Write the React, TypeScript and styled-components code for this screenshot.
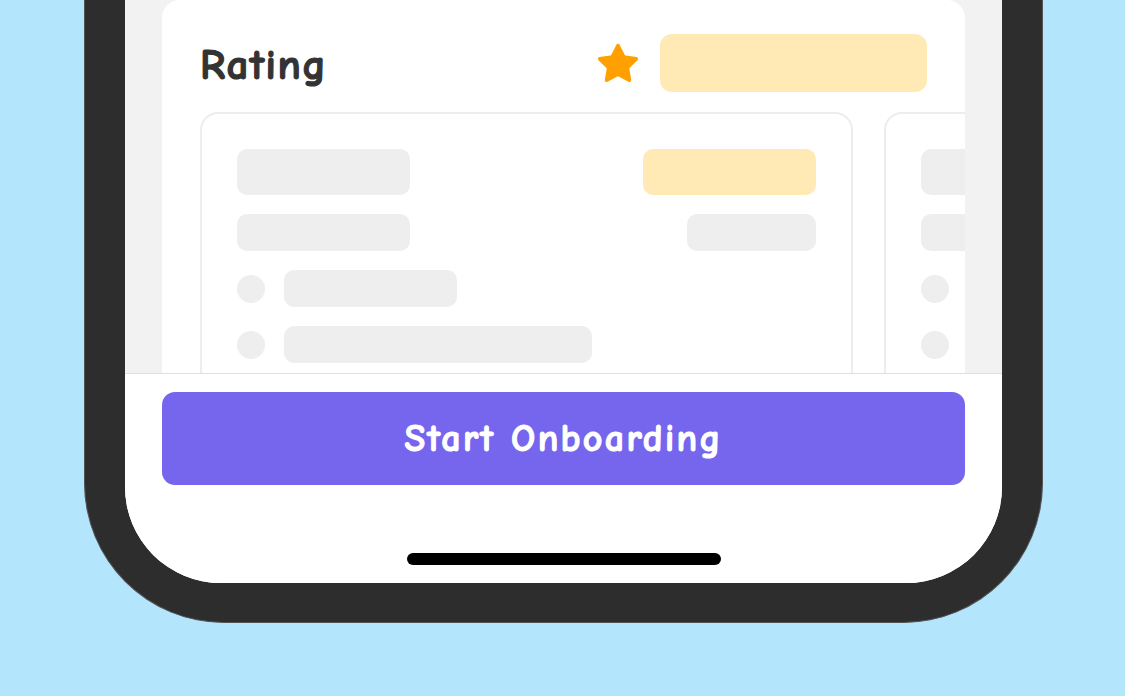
import styled, { createGlobalStyle } from "styled-components";

const GlobalStyle = createGlobalStyle`
    * {
        box-sizing: border-box;
    }
    html, body {
        margin: 0;
        padding: 0;
        background: #b3e5fc;
        font-family: "Comic Sans MS", "Comic Neue", "Noto Sans", sans-serif;
        overflow: hidden;
    }
`;

const StarIcon = () => (
    <svg width="46" height="46" viewBox="0 0 24 24">
        <polygon
            points="12,2.5 15,8.4 21.5,9.3 16.8,13.9 17.9,20.4 12,17.3 6.1,20.4 7.2,13.9 2.5,9.3 9,8.4"
            fill="#ffa000"
            stroke="#ffa000"
            strokeWidth="2"
            strokeLinejoin="round"
        />
    </svg>
);

const SkeletonCard = () => (
    <InfoCard>
        <Row>
            <Bar $w={173} $h={46} />
            <Bar $w={173} $h={46} $tone="yellow" />
        </Row>
        <Row>
            <Bar $w={173} $h={37} />
            <Bar $w={129} $h={37} />
        </Row>
        <ListRow>
            <Dot />
            <Bar $w={173} $h={37} />
        </ListRow>
        <ListRow>
            <Dot />
            <Bar $w={308} $h={37} />
        </ListRow>
        <ListRow>
            <Dot />
            <Bar $w={240} $h={37} />
        </ListRow>
    </InfoCard>
);

const App = () => {
    return (
        <>
            <GlobalStyle />
            <Stage>
                <Phone>
                    <Screen>
                        <ScrollArea>
                            <RatingPanel>
                                <PanelHeader>
                                    <Title>Rating</Title>
                                    <ScoreGroup>
                                        <StarIcon />
                                        <Bar $w={267} $h={58} $tone="yellow" $radius={12} />
                                    </ScoreGroup>
                                </PanelHeader>
                                <CardStrip>
                                    <SkeletonCard />
                                    <SkeletonCard />
                                </CardStrip>
                            </RatingPanel>
                        </ScrollArea>
                        <BottomBar>
                            <PrimaryButton type="button">Start Onboarding</PrimaryButton>
                            <HomeIndicator />
                        </BottomBar>
                    </Screen>
                </Phone>
            </Stage>
        </>
    );
};

const Stage = styled.main`
    width: 1125px;
    height: 696px;
    padding-left: 84px;
`;
const Phone = styled.div`
    width: 959px;
    padding: 0 40px 39px 40px;
    background: #2d2d2d;
    border: 1px solid #545454;
    border-top: none;
    border-radius: 0 0 140px 140px;
`;
const Screen = styled.div`
    width: 877px;
    height: 583px;
    display: flex;
    flex-direction: column;
    background: #ffffff;
    border-radius: 0 0 96px 96px;
    overflow: hidden;
`;
const ScrollArea = styled.div`
    height: 373px;
    flex-shrink: 0;
    padding: 0 37px;
    background: #f2f2f2;
    overflow: hidden;
`;
const RatingPanel = styled.section`
    width: 803px;
    padding: 34px 38px 0 38px;
    background: #ffffff;
    border-radius: 18px 18px 0 0;
    overflow: hidden;
`;
const PanelHeader = styled.div`
    display: flex;
    align-items: center;
    justify-content: space-between;
    height: 58px;
`;
const Title = styled.h2`
    margin: 0;
    font-size: 43px;
    font-weight: 700;
    letter-spacing: 1.5px;
    -webkit-text-stroke: 1.2px #333333;
    color: #333333;
    line-height: 1;
    padding-top: 4px;
`;
const ScoreGroup = styled.div`
    display: flex;
    align-items: center;
    gap: 19px;

    svg {
        margin-top: 2px;
    }
`;
const CardStrip = styled.div`
    display: flex;
    gap: 31px;
    margin-top: 20px;
    width: max-content;
`;
const InfoCard = styled.div`
    width: 653px;
    flex-shrink: 0;
    display: flex;
    flex-direction: column;
    gap: 19px;
    padding: 35px;
    border: 2px solid #ededed;
    border-radius: 18px;
    background: #ffffff;
`;
const Row = styled.div`
    display: flex;
    justify-content: space-between;
    align-items: center;
`;
const ListRow = styled.div`
    display: flex;
    align-items: center;
    gap: 19px;
`;
const Bar = styled.div<{ $w: number; $h: number; $tone?: "grey" | "yellow"; $radius?: number }>`
    width: ${(p) => p.$w}px;
    height: ${(p) => p.$h}px;
    border-radius: ${(p) => p.$radius ?? 10}px;
    background: ${(p) => (p.$tone === "yellow" ? "#ffeab5" : "#eeeeee")};
    flex-shrink: 0;
`;
const Dot = styled.div`
    width: 28px;
    height: 28px;
    border-radius: 50%;
    background: #eeeeee;
    flex-shrink: 0;
`;
const BottomBar = styled.div`
    flex: 1;
    display: flex;
    flex-direction: column;
    align-items: center;
    padding: 18px 37px 0 37px;
    border-top: 1px solid #e0e0e0;
    background: #ffffff;
`;
const PrimaryButton = styled.button`
    width: 100%;
    height: 93px;
    border: none;
    border-radius: 13px;
    background: #7666ee;
    color: #ffffff;
    font-family: inherit;
    font-size: 38px;
    font-weight: 700;
    letter-spacing: 2.3px;
    -webkit-text-stroke: 1.1px #ffffff;
    cursor: pointer;
`;
const HomeIndicator = styled.div`
    width: 314px;
    height: 12px;
    margin-top: 68px;
    border-radius: 6px;
    background: #000000;
`;

export default App;
